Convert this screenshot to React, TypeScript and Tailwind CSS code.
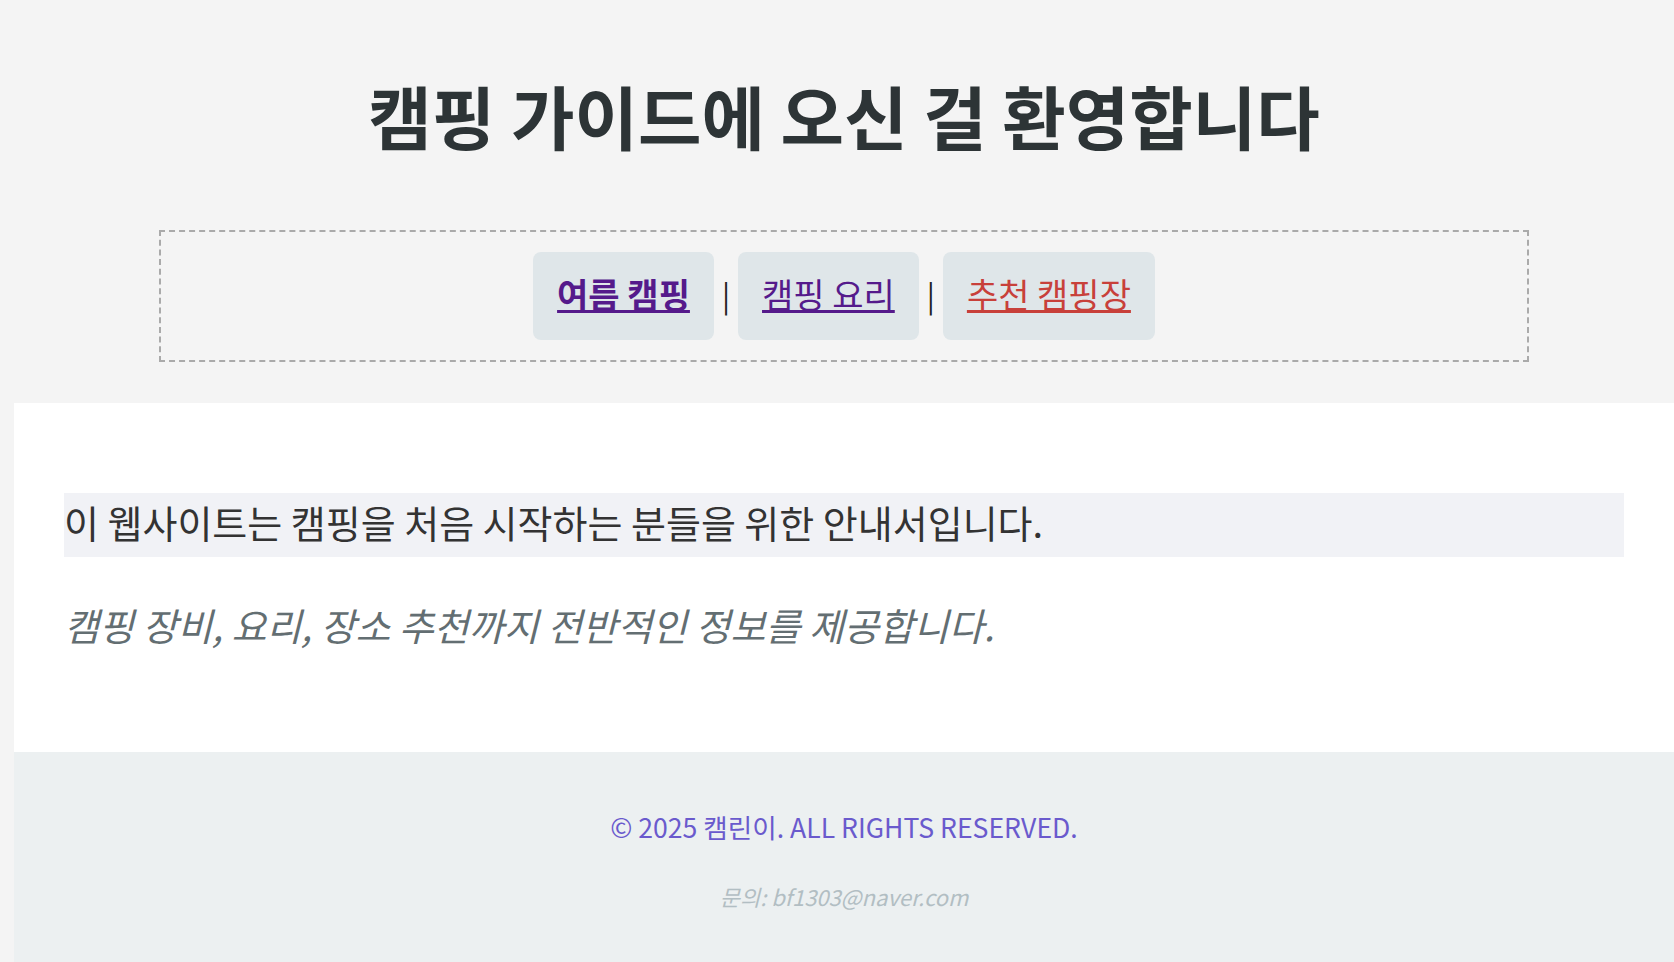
import React from "react";

const font = { fontFamily: '"Noto Sans CJK KR", "Noto Sans", sans-serif' };

export default function App() {
  return (
    <div className="min-h-screen w-full bg-[#f4f4f4] pl-[14px] overflow-hidden" style={font}>
      <header className="flex flex-col items-center pt-[65px]">
        <h1 className="text-[69px] font-bold leading-[100px] text-[#2d3436]">캠핑 가이드에 오신 걸 환영합니다</h1>
        <nav className="mt-[65px] mx-[145px] self-stretch border-2 border-dashed border-[#aaaaaa] py-[20px] flex items-center justify-center gap-[8px] text-[34px]">
          <a href="#" className="rounded-lg bg-[#dfe6e9] px-6 pb-[6px] h-[88px] flex items-center font-bold text-[#551a8b] underline">여름 캠핑</a>
          <span className="text-[30px] text-[#222] pb-[4px]">|</span>
          <a href="#" className="rounded-lg bg-[#dfe6e9] px-6 pb-[6px] h-[88px] flex items-center text-[#551a8b] underline">캠핑 요리</a>
          <span className="text-[30px] text-[#222] pb-[4px]">|</span>
          <a href="#" className="rounded-lg bg-[#dfe6e9] px-6 pb-[6px] h-[88px] flex items-center text-[#c8403a] underline">추천 캠핑장</a>
        </nav>
      </header>
      <main className="mt-[41px] bg-white px-[50px] pt-[90px] pb-[95px]">
        <p className="bg-[#f1f2f6] text-[38px] leading-[58px] pb-[6px] text-[#333333]">이 웹사이트는 캠핑을 처음 시작하는 분들을 위한 안내서입니다.</p>
        <p className="mt-[36px] text-[38px] leading-[64px] italic text-[#636e72]">캠핑 장비, 요리, 장소 추천까지 전반적인 정보를 제공합니다.</p>
      </main>
      <footer className="bg-[#ecf0f1] flex flex-col items-center pt-[55px] pb-[60px]">
        <p className="text-[26.6px] leading-[40px] text-[#6a5acd]">© 2025 캠린이. ALL RIGHTS RESERVED.</p>
        <p className="mt-[34px] text-[22px] leading-[30px] italic text-[#b2bec3]">문의: bf1303@naver.com</p>
      </footer>
    </div>
  );
}
